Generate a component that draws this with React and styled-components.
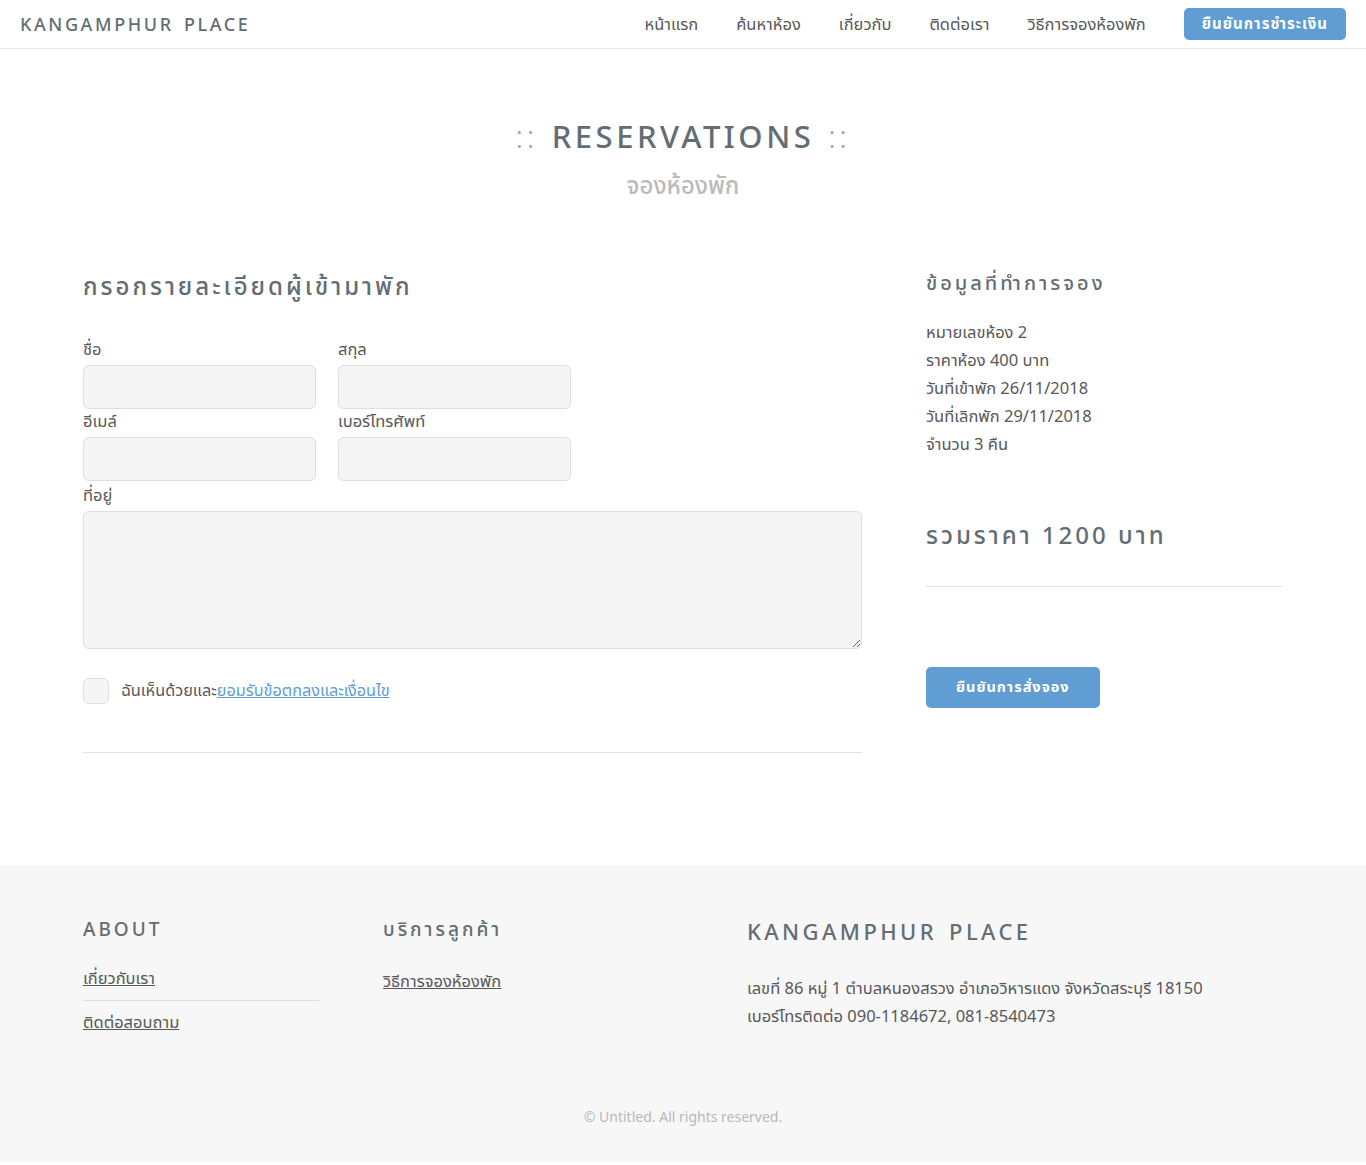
import React from 'react'
import styled, { createGlobalStyle } from 'styled-components'

const GlobalStyle = createGlobalStyle`
  body {
    margin: 0;
    background: #fff;
    font-family: "Noto Sans", "Noto Sans Thai", "DejaVu Sans", sans-serif;
    color: #585858;
  }
  * { box-sizing: border-box; }
`

const Header = styled.header`
  height: 49px;
  border-bottom: 1px solid #e6e6e6;
  display: flex;
  align-items: center;
  justify-content: space-between;
  padding: 0 20px;
`

const Logo = styled.div`
  font-size: 18px;
  letter-spacing: 2.6px;
  color: #646d74;
  font-weight: 500;
  word-spacing: 3px;
`

const Nav = styled.nav`
  display: flex;
  align-items: center;
  gap: 38px;
`

const NavLink = styled.a`
  font-size: 16.5px;
  color: #585858;
  text-decoration: none;
`

const Button = styled.button`
  border: none;
  background: #5f9dd2;
  color: #fff;
  font-family: inherit;
  font-weight: 700;
  font-size: ${p => (p.$small ? '15px' : '14.5px')};
  letter-spacing: 1px;
  border-radius: 5px;
  padding: ${p => (p.$small ? '0 18px' : '0 30px')};
  height: ${p => (p.$small ? '32px' : '41px')};
  cursor: pointer;
`

const TitleWrap = styled.section`
  text-align: center;
  padding-top: 66px;
`

const Title = styled.h1`
  margin: 0;
  font-size: 31px;
  font-weight: 500;
  letter-spacing: 3.5px;
  color: #646d74;
`

const Dots = styled.span`
  color: #9aa2a8;
  font-weight: 300;
  margin: 0 14px;
`

const Sub = styled.h2`
  margin: 11px 0 0;
  font-size: 24px;
  font-weight: 500;
  color: #bbbbbb;
`

const Main = styled.main`
  display: grid;
  grid-template-columns: 779px 357px;
  gap: 64px;
  padding: 64px 0 112px 83px;
`

const SectionTitle = styled.h3`
  margin: 0;
  font-size: ${p => p.$size || 24}px;
  font-weight: 500;
  letter-spacing: 3px;
  color: #646d74;
`

const FormGrid = styled.div`
  display: grid;
  grid-template-columns: 233px 233px;
  column-gap: 22px;
  margin-top: 31px;
`

const Field = styled.label`
  display: flex;
  flex-direction: column;
  font-size: 16.5px;
  color: #585858;
  line-height: 24px;
  grid-column: ${p => (p.$wide ? '1 / -1' : 'auto')};
  margin-top: ${p => (p.$wide ? '2px' : '0')};
`

const Input = styled.input`
  margin-top: 4px;
  height: 44px;
  background: #f5f5f5;
  border: 1px solid #dedede;
  border-radius: 6px;
`

const TextArea = styled.textarea`
  margin-top: 4px;
  width: 779px;
  height: 138px;
  background: #f5f5f5;
  border: 1px solid #dedede;
  border-radius: 6px;
  resize: vertical;
`

const Agree = styled.div`
  display: flex;
  align-items: center;
  gap: 12px;
  margin-top: 29px;
  font-size: 16.3px;
`

const Box = styled.span`
  width: 26px;
  height: 26px;
  border: 1px solid #dedede;
  background: #f5f5f5;
  border-radius: 6px;
`

const Link = styled.a`
  color: ${p => p.$color || '#5f9dd2'};
  text-decoration: underline;
`

const Rule = styled.hr`
  border: none;
  border-top: 1px solid #e2e2e2;
  margin: ${p => p.$m || '0'};
`

const InfoList = styled.div`
  margin-top: 19px;
  font-size: 16.5px;
  line-height: 28px;
`

const Total = styled.div`
  margin-top: 60px;
`

const Footer = styled.footer`
  background: #f7f7f7;
  padding: 51px 0 36px 83px;
`

const FooterCols = styled.div`
  display: grid;
  grid-template-columns: 300px 364px 1fr;
`

const FooterHead = styled.h4`
  margin: 0;
  font-size: ${p => p.$size || 19}px;
  font-weight: 500;
  letter-spacing: ${p => p.$ls || 3}px;
  color: #646d74;
  word-spacing: 3px;
`

const LinkList = styled.div`
  margin-top: 24px;
  width: 236px;
  font-size: 16.5px;
`

const FootItem = styled.div`
  padding: ${p => (p.$last ? '9px 0 0' : '0 0 9px')};
  border-bottom: ${p => (p.$last ? 'none' : '1px solid #dcdcdc')};
`

const Address = styled.div`
  margin-top: 28px;
  font-size: 16.5px;
  line-height: 28px;
`

const Copy = styled.div`
  text-align: center;
  color: #b8b8b8;
  font-size: 14px;
  margin: 72px 83px 0 0;
`

export default function App() {
  return (
    <>
      <GlobalStyle />
      <Header>
        <Logo>KANGAMPHUR PLACE</Logo>
        <Nav>
          <NavLink>หน้าแรก</NavLink>
          <NavLink>ค้นหาห้อง</NavLink>
          <NavLink>เกี่ยวกับ</NavLink>
          <NavLink>ติดต่อเรา</NavLink>
          <NavLink>วิธีการจองห้องพัก</NavLink>
          <Button $small>ยืนยันการชำระเงิน</Button>
        </Nav>
      </Header>

      <TitleWrap>
        <Title><Dots>::</Dots>RESERVATIONS<Dots>::</Dots></Title>
        <Sub>จองห้องพัก</Sub>
      </TitleWrap>

      <Main>
        <div>
          <SectionTitle>กรอกรายละเอียดผู้เข้ามาพัก</SectionTitle>
          <FormGrid>
            <Field>ชื่อ<Input /></Field>
            <Field>สกุล<Input /></Field>
            <Field>อีเมล์<Input /></Field>
            <Field>เบอร์โทรศัพท์<Input /></Field>
            <Field $wide>ที่อยู่<TextArea /></Field>
          </FormGrid>
          <Agree>
            <Box />
            <span>ฉันเห็นด้วยและ<Link>ยอมรับข้อตกลงและเงื่อนไข</Link></span>
          </Agree>
          <Rule $m="48px 0 0" />
        </div>
        <div>
          <SectionTitle $size={20}>ข้อมูลที่ทำการจอง</SectionTitle>
          <InfoList>
            <div>หมายเลขห้อง 2</div>
            <div>ราคาห้อง 400 บาท</div>
            <div>วันที่เข้าพัก 26/11/2018</div>
            <div>วันที่เลิกพัก 29/11/2018</div>
            <div>จำนวน 3 คืน</div>
          </InfoList>
          <Total>
            <SectionTitle>รวมราคา 1200 บาท</SectionTitle>
          </Total>
          <Rule $m="31px 0 80px" />
          <Button>ยืนยันการสั่งจอง</Button>
        </div>
      </Main>

      <Footer>
        <FooterCols>
          <div>
            <FooterHead>ABOUT</FooterHead>
            <LinkList>
              <FootItem><Link $color="#585858">เกี่ยวกับเรา</Link></FootItem>
              <FootItem $last><Link $color="#585858">ติดต่อสอบถาม</Link></FootItem>
            </LinkList>
          </div>
          <div>
            <FooterHead>บริการลูกค้า</FooterHead>
            <LinkList>
              <FootItem $last style={{ paddingTop: 0 }}><Link $color="#585858">วิธีการจองห้องพัก</Link></FootItem>
            </LinkList>
          </div>
          <div>
            <FooterHead $size={22} $ls={3.4}>KANGAMPHUR PLACE</FooterHead>
            <Address>
              <div>เลขที่ 86 หมู่ 1 ตำบลหนองสรวง อำเภอวิหารแดง จังหวัดสระบุรี 18150</div>
              <div>เบอร์โทรติดต่อ 090-1184672, 081-8540473</div>
            </Address>
          </div>
        </FooterCols>
        <Copy>© Untitled. All rights reserved.</Copy>
      </Footer>
    </>
  )
}
